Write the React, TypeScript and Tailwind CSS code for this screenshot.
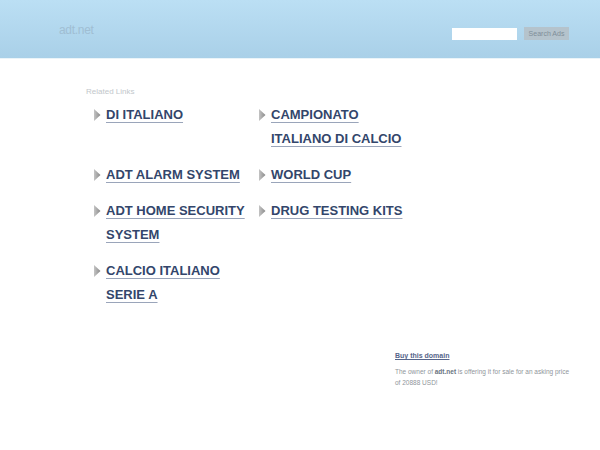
const LEFT = [
  ["DI ITALIANO"],
  ["ADT ALARM SYSTEM"],
  ["ADT HOME SECURITY", "SYSTEM"],
  ["CALCIO ITALIANO", "SERIE A"],
];

const RIGHT = [
  ["CAMPIONATO", "ITALIANO DI CALCIO"],
  ["WORLD CUP"],
  ["DRUG TESTING KITS"],
  [],
];

function Arrow() {
  return (
    <svg width="8" height="12" viewBox="0 0 8 12" className="mt-[6px] shrink-0">
      <defs>
        <linearGradient id="ag" x1="0" y1="0" x2="1" y2="0">
          <stop offset="0" stopColor="#c4c4c4" />
          <stop offset="1" stopColor="#8a8a8a" />
        </linearGradient>
      </defs>
      <path d="M1 0 L7.5 6 L1 12 Z" fill="url(#ag)" />
    </svg>
  );
}

function LinkItem({ lines }: { lines: string[] }) {
  if (lines.length === 0) return <div />;
  return (
    <div className="flex items-start gap-[5px]">
      <Arrow />
      <a
        href="#"
        className="text-[13px] font-bold leading-[24px] text-[#33466b] underline decoration-[#9aa5ba] underline-offset-[3px]"
      >
        {lines.map((l, i) => (
          <span key={i} className="block">
            {l}
          </span>
        ))}
      </a>
    </div>
  );
}

export default function App() {
  return (
    <div className="min-h-[450px] bg-white font-['Liberation_Sans',Arial,sans-serif]">
      <header className="flex h-[59px] items-start bg-gradient-to-b from-[#bbdff4] to-[#a9d0e8] border-b border-[#eaf4f9]">
        <div className="pl-[59px] pt-[21px] text-[12px] tracking-[-0.3px] text-[#a0bed3]">adt.net</div>
        <div className="ml-auto flex items-center gap-[7px] pr-[31px] pt-[27px]">
          <input className="h-[12px] w-[65px] bg-white outline-none" />
          <button className="h-[13px] w-[45px] bg-[#b5c3cc] text-[7px] leading-[13px] text-[#7f8e99]">
            Search Ads
          </button>
        </div>
      </header>

      <div className="pl-[86px] pt-[27px] text-[8px] text-[#c2c7cb]">Related Links</div>

      <div className="grid grid-cols-[165px_165px] pl-[93px] pt-[5px]">
        {LEFT.map((l, i) => (
          <div key={i} className="contents">
            <div className="pb-[12px]">
              <LinkItem lines={l} />
            </div>
            <div className="pb-[12px]">
              <LinkItem lines={RIGHT[i]} />
            </div>
          </div>
        ))}
      </div>

      <div className="ml-[395px] mt-[22px] w-[180px]">
        <a href="#" className="text-[7px] font-bold text-[#56658a] underline">
          Buy this domain
        </a>
        <p className="mt-[1px] text-[6.5px] leading-[11px] text-[#8f959b]">
          The owner of <b className="text-[#6a7380]">adt.net</b> is offering it for sale for an asking price
          <br />
          of 20888 USD!
        </p>
      </div>
    </div>
  );
}
